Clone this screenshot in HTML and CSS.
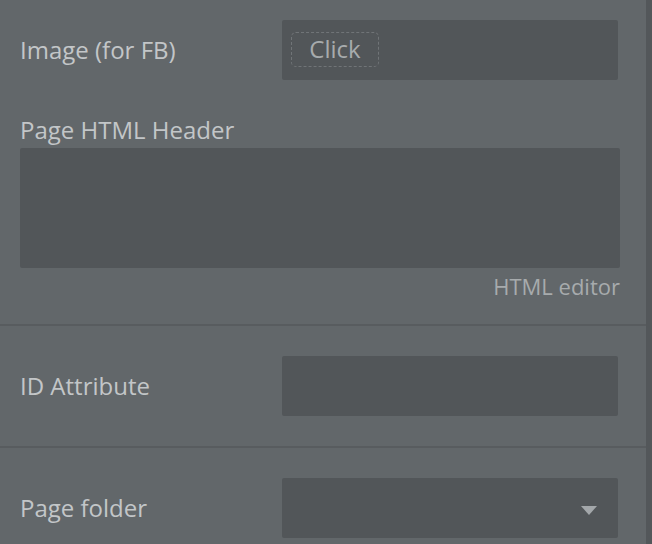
FILE: index.html
```html
<!DOCTYPE html>
<html>
<head>
<meta charset="utf-8">
<link rel="stylesheet" href="styles.css">
</head>
<body>
<div class="panel">
  <div class="content">
    <section class="section first">
      <div class="row">
        <div class="label">Image (for FB)</div>
        <div class="field">
          <div class="click">Click</div>
        </div>
      </div>
      <div class="label block-label">Page HTML Header</div>
      <div class="textarea"></div>
      <div class="link">HTML editor</div>
    </section>
    <div class="sep"></div>
    <section class="section">
      <div class="row">
        <div class="label">ID Attribute</div>
        <div class="field"></div>
      </div>
    </section>
    <div class="sep"></div>
    <section class="section">
      <div class="row">
        <div class="label">Page folder</div>
        <div class="field select">
          <svg class="caret" width="16" height="9" viewBox="0 0 16 9"><path d="M0 0H16L8 9Z" fill="#a3a7aa"/></svg>
        </div>
      </div>
    </section>
  </div>
  <div class="strip"></div>
</div>
</body>
</html>
```
FILE: styles.css
```css
html, body {
  margin: 0;
  padding: 0;
  background: #62676a;
  height: 100%;
  overflow: hidden;
}
body {
  font-family: "Open Sans", "Liberation Sans", sans-serif;
  color: #c3c6c8;
}
.panel {
  display: flex;
  height: 544px;
  overflow: hidden;
}
.content {
  width: 646px;
  flex-shrink: 0;
  display: flex;
  flex-direction: column;
}
.content > * {
  flex-shrink: 0;
}
.strip {
  width: 6px;
  flex-shrink: 0;
  background: #53575a;
}
.section {
  padding: 30px 26px 30px 20px;
  display: flex;
  flex-direction: column;
}
.section.first {
  padding-top: 20px;
  padding-bottom: 24px;
}
.row {
  display: flex;
  align-items: center;
  height: 60px;
}
.label {
  width: 262px;
  font-size: 24px;
  line-height: 28px;
  color: #c3c6c8;
}
.field {
  width: 336px;
  height: 60px;
  background: #525659;
  border-radius: 2px;
  box-sizing: border-box;
  padding: 12px 9px;
  display: flex;
  align-items: flex-start;
}
.click {
  width: 88px;
  height: 35px;
  box-sizing: border-box;
  border: 1px dashed #707477;
  border-radius: 5px;
  font-size: 24px;
  line-height: 32px;
  text-align: center;
  color: #a7abad;
}
.block-label {
  margin-top: 36px;
  width: auto;
}
.textarea {
  margin-top: 4px;
  height: 120px;
  background: #525659;
  border-radius: 2px;
}
.link {
  margin-top: 4px;
  text-align: right;
  font-size: 22px;
  line-height: 28px;
  color: #a7abad;
}
.sep {
  height: 2px;
  background: #585c5f;
}
.select {
  align-items: center;
  justify-content: flex-end;
  padding: 0 21px 0 0;
}
.caret {
  display: block;
  margin-top: 4px;
}
```
